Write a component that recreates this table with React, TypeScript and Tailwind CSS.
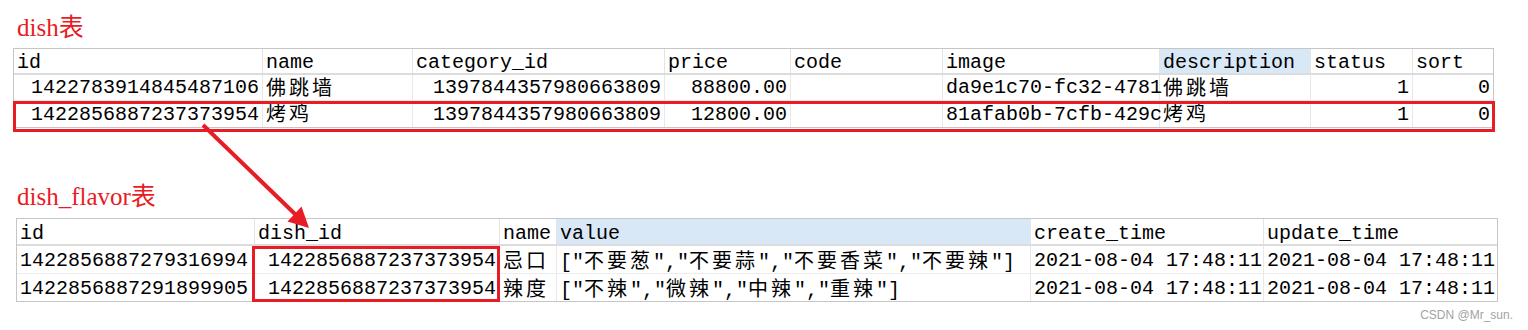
import React from "react";

const MONO = { fontFamily: '"Liberation Mono", "Courier New", monospace' };

function Txt({ s }: { s: string }) {
  const parts = s.split(/([\u3000-\u9fff\uff00-\uffef]+)/).filter((p) => p.length > 0);
  return (
    <>
      {parts.map((p, i) =>
        /[\u3000-\u9fff\uff00-\uffef]/.test(p) ? (
          <span
            key={i}
            className="tracking-[3px] leading-[20px]"
            style={{ fontFamily: '"Noto Sans CJK SC", "Noto Sans CJK JP", sans-serif' }}
          >
            {p}
          </span>
        ) : (
          <span key={i}>{p}</span>
        )
      )}
    </>
  );
}

type Col = { key: string; right?: boolean; hl?: boolean };

function Table({
  cols,
  template,
  rows,
  rowClasses,
  widthClass,
  marginClass,
  headerPad,
  bodyPad,
}: {
  cols: Col[];
  template: string;
  rows: string[][];
  rowClasses: string[];
  widthClass: string;
  marginClass: string;
  headerPad: string;
  bodyPad: string;
}) {
  return (
    <div
      className={`${widthClass} ${marginClass} border border-[#c6c6c6] bg-white text-[20px] leading-[20px] text-black`}
      style={MONO}
    >
      <div className={`grid ${template} ${rowClasses[0]} border-b-2 border-[#dcdcdc]`}>
        {cols.map((c, i) => (
          <div
            key={c.key}
            className={`flex items-center px-[3px] ${headerPad} whitespace-nowrap ${
              i < cols.length - 1 ? "border-r border-[#e3e3e3]" : ""
            } ${c.hl ? "bg-[#d9e8f6]" : ""}`}
          >
            {c.key}
          </div>
        ))}
      </div>
      {rows.map((r, ri) => (
        <div
          key={ri}
          className={`grid ${template} ${rowClasses[ri + 1]} ${
            ri < rows.length - 1 ? "border-b border-[#ececec]" : ""
          }`}
        >
          {r.map((v, i) => (
            <div
              key={i}
              className={`flex items-center px-[3px] ${bodyPad} whitespace-nowrap ${
                cols[i].right ? "justify-end" : "justify-start"
              } ${i < cols.length - 1 ? "border-r border-[#e8e8e8]" : ""}`}
            >
              <span>
                <Txt s={v} />
              </span>
            </div>
          ))}
        </div>
      ))}
    </div>
  );
}

export default function App() {
  const red = "#e81c24";
  const dishCols: Col[] = [
    { key: "id", right: true },
    { key: "name" },
    { key: "category_id", right: true },
    { key: "price", right: true },
    { key: "code" },
    { key: "image" },
    { key: "description", hl: true },
    { key: "status", right: true },
    { key: "sort", right: true },
  ];
  const dishRows = [
    ["1422783914845487106", "佛跳墙", "1397844357980663809", "88800.00", "", "da9e1c70-fc32-4781", "佛跳墙", "1", "0"],
    ["1422856887237373954", "烤鸡", "1397844357980663809", "12800.00", "", "81afab0b-7cfb-429c", "烤鸡", "1", "0"],
  ];
  const flavorCols: Col[] = [
    { key: "id" },
    { key: "dish_id", right: true },
    { key: "name" },
    { key: "value", hl: true },
    { key: "create_time" },
    { key: "update_time" },
  ];
  const flavorRows = [
    ["1422856887279316994", "1422856887237373954", "忌口", '["不要葱","不要蒜","不要香菜","不要辣"]', "2021-08-04 17:48:11", "2021-08-04 17:48:11"],
    ["1422856887291899905", "1422856887237373954", "辣度", '["不辣","微辣","中辣","重辣"]', "2021-08-04 17:48:11", "2021-08-04 17:48:11"],
  ];

  const titleStyle = {
    fontFamily: '"Liberation Serif", "Times New Roman", "Noto Sans CJK SC", serif',
  };

  return (
    <div className="relative w-[1528px] h-[330px] bg-white overflow-hidden">
      <div className="pt-[14px] pl-[17px] h-[48px]">
        <div className="text-[25px] leading-[28px] text-[#e81c24]" style={titleStyle}>
          dish表
        </div>
      </div>
      <Table
        cols={dishCols}
        template="grid-cols-[249px_150px_252px_126px_152px_217px_151px_102px_80px]"
        rows={dishRows}
        rowClasses={["h-[26px]", "h-[26px]", "h-[26px]"]}
        widthClass="w-[1481px]"
        marginClass="ml-[13px]"
        headerPad="pt-[4px]"
        bodyPad="pt-[1px]"
      />
      <div className="pt-[55px] pl-[17px] h-[90px]">
        <div className="text-[25px] leading-[28px] text-[#e81c24]" style={titleStyle}>
          dish_flavor表
        </div>
      </div>
      <Table
        cols={flavorCols}
        template="grid-cols-[238px_245px_57px_474px_233px_233px]"
        rows={flavorRows}
        rowClasses={["h-[27px]", "h-[28px]", "h-[27px]"]}
        widthClass="w-[1482px]"
        marginClass="ml-[16px]"
        headerPad="pt-[4px]"
        bodyPad="pt-[3px]"
      />
      <div
        className="flex justify-end pr-[15px] pt-[6px] text-[12px] leading-[15px] text-[#a3a3a3]"
        style={{ fontFamily: '"Liberation Sans", Arial, sans-serif' }}
      >
        CSDN @Mr_sun.
      </div>

      {/* annotations */}
      <div className="absolute left-[13px] top-[101px] w-[1482px] h-[31px] border-[3px] border-[#e81c24] pointer-events-none" />
      <div className="absolute left-[252px] top-[246px] w-[248px] h-[56px] border-[3px] border-[#e81c24] pointer-events-none" />
      <svg
        className="absolute left-0 top-0 pointer-events-none"
        width="1528"
        height="330"
        viewBox="0 0 1528 330"
      >
        <line x1="203" y1="125" x2="296" y2="215" stroke={red} strokeWidth="4" />
        <polygon points="309,228 287.5,221.5 301.5,206.5" fill={red} />
      </svg>
    </div>
  );
}
